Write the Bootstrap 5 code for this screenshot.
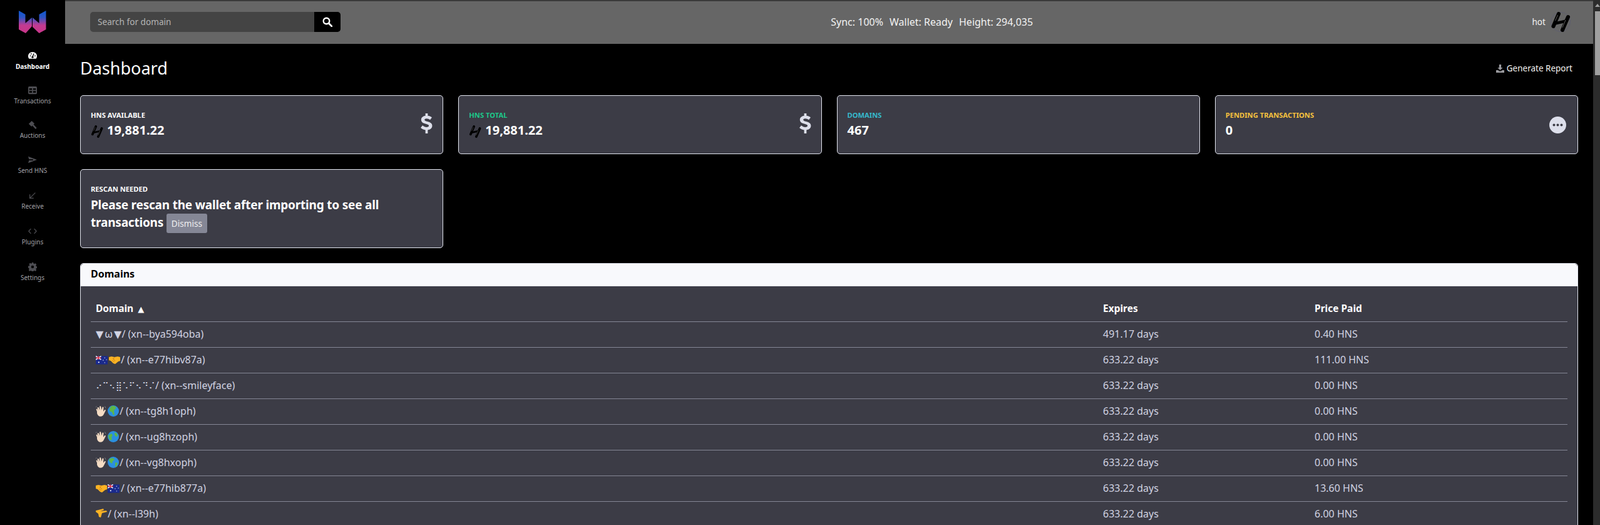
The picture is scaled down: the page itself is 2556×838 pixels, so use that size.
<!DOCTYPE html>
<html lang="en">
<head>
  <meta charset="UTF-8">
  <title>Dashboard</title>
  <link href="https://cdn.jsdelivr.net/npm/bootstrap@5.3.0/dist/css/bootstrap.min.css" rel="stylesheet">
  <style>
    html, body { height: 100%; overflow: hidden; }
    body { background: #000; color: #fff; font-family: "Noto Sans", "Liberation Sans", sans-serif; font-size: 16px; }
    .app-shell { height: 838px; }

    .side-nav { width: 104px; flex: none; background: #000; }
    .side-logo { height: 70px; }
    .side-link { color: #a0a0a6; font-size: 10px; line-height: 15.6px; text-decoration: none; height: 55px; padding-top: 12px; }
    .side-link.is-tall { height: 57px; padding-top: 13px; }
    .side-link.is-on { color: #fff; font-weight: 700; }
    .side-link svg { width: 14px; height: 14px; margin-bottom: 3px; flex: none; }

    .main-col { min-width: 0; }
    .top-strip { height: 70px; flex: none; background: #666; border-top: 2px solid #3a3a3a; padding: 0 36px 2px 40px; }
    .search-box { width: 400px; height: 32px; background: #444; border-radius: 5px; overflow: hidden; }
    .search-box input { background: transparent; border: 0; outline: 0; color: #ccc; font-size: 13.6px; padding: 0 12px; min-width: 0; }
    .search-box input::placeholder { color: #b4b4b4; }
    .search-go { width: 42px; border: 0; background: #000; }
    .sync-text { font-size: 16px; color: #f2f2f2; gap: 10px; margin-right: 14px; }
    .user-name { font-size: 13.6px; color: #f2f2f2; }
    .user-pic { width: 32px; height: 32px; }

    .page-body { padding: 22px 24px 0; }
    .page-title { font-size: 27px; font-weight: 400; margin: 0; line-height: 34px; }
    .report-link { color: #f2f2f2; font-size: 13.5px; text-decoration: none; margin-right: 9px; }
    .head-row { margin-bottom: 26px; height: 34px; }
    .stat-row { --bs-gutter-x: 24px; --bs-gutter-y: 24px; margin-bottom: 24px; }
    .stat-box { background: #3c3c46; border: 1px solid #e3e6f0; border-radius: 5px; height: 94px; padding: 23px 16px 0; }
    .stat-box.tall-box { height: 126px; }
    .stat-label { font-size: 11.2px; font-weight: 700; text-transform: uppercase; line-height: 16px; margin-bottom: 4px; color: #fff; }
    .stat-label.lbl-green { color: #1cc88a; }
    .stat-label.lbl-cyan { color: #36b9cc; }
    .stat-label.lbl-amber { color: #f6c23e; }
    .stat-value { font-size: 20px; font-weight: 700; line-height: 24px; }
    .tall-box .stat-value { font-size: 19px; letter-spacing: -.2px; line-height: 27px; }
    .hns-mark { width: 20px; height: 20px; vertical-align: -5px; margin-right: 6px; }
    .dollar-ico { width: 19px; height: 32px; margin-top: 5px; flex: none; }
    .dots-ico { width: 27px; height: 27px; margin-top: 10px; margin-right: 2px; flex: none; }
    .dismiss-btn { background: #858796; color: #f0f0f0; font-size: 13.6px; font-weight: 400; letter-spacing: 0; line-height: 21px; border: 0; border-radius: 3px; padding: 5px 8px; vertical-align: middle; }

    .domain-card { background: #3c3c46; border: 1px solid #e3e6f0; border-radius: 5px 5px 0 0; }
    .domain-card .card-header { background: #f8f9fc; color: #000; font-weight: 700; font-size: 16px; height: 36px; padding: 4px 16px; border-bottom: 1px solid #e3e6f0; }
    .domain-card .card-body { padding: 16px; }
    .domain-table { --bs-table-bg: transparent; --bs-table-color: #d1d3e2; margin: 0; table-layout: fixed; color: #d1d3e2; }
    .domain-table th { color: #fff; font-weight: 700; font-size: 15.5px; }
    .domain-table th, .domain-table td { padding: 7px 8px 9px; line-height: 24px; border-bottom: 1px solid #858796; white-space: nowrap; }
    .domain-table .col-name { width: 1609px; }
    .domain-table .col-exp { width: 338px; }
    .emo { width: 18px; height: 18px; vertical-align: -3px; margin-right: 1px; }
    .flag-emo { width: 19px; height: 14px; vertical-align: -2px; margin-right: 2px; }
    .dots { font-family: "DejaVu Sans", sans-serif; font-size: 14px; line-height: 1; letter-spacing: .3px; }
    .tri { font-family: "DejaVu Sans", sans-serif; font-size: 16px; line-height: 1; }
    .omega { margin: 0 2px; }
    .tri-head { font-family: "DejaVu Sans", sans-serif; font-size: 13px; line-height: 1; margin-left: 3px; }

    .fake-scroll { width: 11px; flex: none; background: #2c2c2c; position: relative; }
    .fake-scroll .thumb { position: absolute; left: 3px; right: 0; top: 18px; height: 102px; background: #9f9f9f; }
    .fake-scroll .up-arrow { position: absolute; left: 3px; top: 6px; width: 0; height: 0; border-left: 4px solid transparent; border-right: 4px solid transparent; border-bottom: 5px solid #9f9f9f; }
  </style>
</head>
<body>

<svg width="0" height="0" class="d-none">
  <symbol id="hns" viewBox="0 0 32 32">
    <g fill="none" stroke="#000" stroke-width="6" stroke-linecap="round">
      <path d="M13 3L4.500 23"/>
      <path d="M28 8L19 29"/>
      <path d="M7 18.500L25 14.500" stroke-width="4.500"/>
    </g>
    <g fill="none" stroke="#777" stroke-width=".8">
      <path d="M11.500 5L7.500 14"/>
      <path d="M24 13l-5 12"/>
    </g>
  </symbol>
</svg>

<div class="app-shell d-flex">

  <!-- sidebar -->
  <nav class="side-nav d-flex flex-column">
    <div class="side-logo d-flex align-items-center justify-content-center">
      <svg width="44" height="36" viewBox="0 0 44 36">
        <defs><linearGradient id="logoFill" x1="0" y1="0" x2="0" y2="1"><stop offset="0" stop-color="#0d58cf"/><stop offset=".3" stop-color="#2d55c4"/><stop offset=".65" stop-color="#c33a91"/><stop offset="1" stop-color="#c9378a"/></linearGradient></defs>
        <path d="M0 0L10.500 6V20L21 11V25L11 36 0 30z M22 11L32.500 20V6L43.500 0V30L32.500 36 22 26z" fill="url(#logoFill)"/>
      </svg>
    </div>
    <a href="#" class="side-link is-on d-flex flex-column align-items-center">
      <svg viewBox="0 0 16 16"><path d="M8 1a8 7.500 0 0 0-8 7.500c0 2 .7 3.700 1.800 5h12.400c1.100-1.300 1.800-3 1.800-5A8 7.500 0 0 0 8 1z" fill="#fff"/><circle cx="4" cy="8" r="1" fill="#000"/><circle cx="5.500" cy="4.500" r="1" fill="#000"/><path d="M10.500 4L8.300 9.500" stroke="#000" stroke-width="1.500"/><circle cx="8" cy="10.500" r="1.800" fill="#000"/><circle cx="12.500" cy="8" r="1" fill="#000"/></svg>
      <span>Dashboard</span>
    </a>
    <a href="#" class="side-link d-flex flex-column align-items-center">
      <svg viewBox="0 0 16 16"><path fill="#4d4d52" fill-rule="evenodd" d="M2 1h12a2 2 0 0 1 2 2v10a2 2 0 0 1-2 2H2a2 2 0 0 1-2-2V3a2 2 0 0 1 2-2zm0 3.500v3h5v-3zm7 0v3h5v-3zm-7 5v3h5v-3zm7 0v3h5v-3z"/></svg>
      <span>Transactions</span>
    </a>
    <a href="#" class="side-link d-flex flex-column align-items-center">
      <svg viewBox="0 0 16 16"><path fill="#4d4d52" d="M1 6.500L6.500 1l5 5L6 11.500z"/><path stroke="#4d4d52" stroke-width="3" d="M8.500 8.500l6 6.500"/></svg>
      <span>Auctions</span>
    </a>
    <a href="#" class="side-link is-tall d-flex flex-column align-items-center">
      <svg viewBox="0 0 16 16"><path fill="#4d4d52" d="M0 2l16 6-16 6 1.500-5H9V7H1.500z"/></svg>
      <span>Send HNS</span>
    </a>
    <a href="#" class="side-link is-tall d-flex flex-column align-items-center">
      <svg viewBox="0 0 16 16"><path fill="none" stroke="#4d4d52" stroke-width="1.500" d="M13 3L3 13M3 6v7h7"/></svg>
      <span>Receive</span>
    </a>
    <a href="#" class="side-link is-tall d-flex flex-column align-items-center">
      <svg viewBox="0 0 16 16"><path fill="none" stroke="#4d4d52" stroke-width="1.500" d="M5 3.500L1 8l4 4.500M11 3.500L15 8l-4 4.500"/></svg>
      <span>Plugins</span>
    </a>
    <a href="#" class="side-link is-tall d-flex flex-column align-items-center">
      <svg viewBox="0 0 16 16"><path fill="#4d4d52" fill-rule="evenodd" d="M6.500 0h3l.4 2.100 1.300.6 1.900-1.200 2.100 2.100-1.200 1.900.6 1.300 2.100.4v3l-2.100.4-.6 1.300 1.200 1.900-2.100 2.100-1.900-1.200-1.300.6-.4 2.100h-3l-.4-2.100-1.300-.6-1.900 1.200-2.100-2.100 1.200-1.900-.6-1.300L0 9.500v-3l2.100-.4.6-1.300L1.500 2.900l2.100-2.100 1.900 1.200 1.300-.6zM8 5.500a2.500 2.500 0 1 0 0 5 2.500 2.500 0 0 0 0-5z"/></svg>
      <span>Settings</span>
    </a>
  </nav>

  <div class="main-col flex-grow-1 d-flex flex-column overflow-hidden">

    <!-- top bar -->
    <header class="top-strip d-flex align-items-center justify-content-between">
      <form class="search-box d-flex">
        <input class="flex-grow-1" type="text" placeholder="Search for domain">
        <button type="button" class="search-go d-flex align-items-center justify-content-center">
          <svg width="16" height="16" viewBox="0 0 16 16"><circle cx="6.500" cy="6.500" r="4.800" fill="none" stroke="#fff" stroke-width="2.400"/><path d="M10 10l5 5" stroke="#fff" stroke-width="2.800" stroke-linecap="round"/></svg>
        </button>
      </form>
      <div class="sync-text d-flex">
        <span>Sync: 100%</span><span>Wallet: Ready</span><span>Height: 294,035</span>
      </div>
      <div class="d-flex align-items-center gap-2">
        <span class="user-name">hot</span>
        <svg class="user-pic" viewBox="0 0 32 32"><circle cx="16" cy="16" r="15.500" fill="none" stroke="#5f5f70"/><use href="#hns"/></svg>
      </div>
    </header>

    <main class="page-body flex-grow-1">
      <div class="head-row d-flex align-items-center justify-content-between">
        <h1 class="page-title">Dashboard</h1>
        <a href="#" class="report-link d-flex align-items-center gap-1">
          <svg width="13" height="13" viewBox="0 0 16 16"><path fill="#9a9a9f" d="M6 0h4v6h3L8 11 3 6h3zM0 11h4l2 2h4l2-2h4v5H0z"/></svg>
          Generate Report
        </a>
      </div>

      <div class="row stat-row">
        <div class="col-3">
          <div class="stat-box d-flex align-items-start justify-content-between">
            <div>
              <div class="stat-label">HNS Available</div>
              <div class="stat-value"><svg class="hns-mark"><use href="#hns"/></svg>19,881.22</div>
            </div>
            <svg class="dollar-ico" viewBox="0 0 20 34"><path fill="#dddfeb" d="M8 0h4v4c3 .3 5.500 1.500 7 3l-3 4c-2-1.500-4-2.300-6-2.300-2.200 0-3.500.8-3.500 2.100 0 1.400 1.500 2 5 3 5 1.300 8 3 8 7.300 0 4-2.800 6.500-7.500 7V34H8v-5.900c-3.200-.4-6-1.700-8-3.600l3-4c2.200 1.800 4.500 2.800 7 2.800 2.400 0 3.800-.9 3.800-2.300 0-1.500-1.500-2.100-5-3.100-5-1.300-8-3-8-7.200C.8 7.300 3.500 4.700 8 4z"/></svg>
          </div>
        </div>
        <div class="col-3">
          <div class="stat-box d-flex align-items-start justify-content-between">
            <div>
              <div class="stat-label lbl-green">HNS Total</div>
              <div class="stat-value"><svg class="hns-mark"><use href="#hns"/></svg>19,881.22</div>
            </div>
            <svg class="dollar-ico" viewBox="0 0 20 34"><path fill="#dddfeb" d="M8 0h4v4c3 .3 5.500 1.500 7 3l-3 4c-2-1.500-4-2.300-6-2.300-2.200 0-3.500.8-3.500 2.100 0 1.400 1.500 2 5 3 5 1.300 8 3 8 7.300 0 4-2.800 6.500-7.500 7V34H8v-5.900c-3.200-.4-6-1.700-8-3.600l3-4c2.200 1.800 4.500 2.800 7 2.800 2.400 0 3.800-.9 3.800-2.300 0-1.500-1.500-2.100-5-3.100-5-1.300-8-3-8-7.200C.8 7.300 3.500 4.700 8 4z"/></svg>
          </div>
        </div>
        <div class="col-3">
          <div class="stat-box">
            <div class="stat-label lbl-cyan">Domains</div>
            <div class="stat-value">467</div>
          </div>
        </div>
        <div class="col-3">
          <div class="stat-box d-flex align-items-start justify-content-between">
            <div>
              <div class="stat-label lbl-amber">Pending Transactions</div>
              <div class="stat-value">0</div>
            </div>
            <svg class="dots-ico" viewBox="0 0 27 27"><circle cx="13.500" cy="13.500" r="13.500" fill="#dddfeb"/><circle cx="7.500" cy="13.500" r="2" fill="#3c3c46"/><circle cx="13.500" cy="13.500" r="2" fill="#3c3c46"/><circle cx="19.500" cy="13.500" r="2" fill="#3c3c46"/></svg>
          </div>
        </div>
        <div class="col-3">
          <div class="stat-box tall-box">
            <div class="stat-label">Rescan Needed</div>
            <div class="stat-value">
              <div>Please rescan the wallet after importing to see all</div>
              <div><span>transactions</span> <button type="button" class="dismiss-btn">Dismiss</button></div>
            </div>
          </div>
        </div>
      </div>

      <div class="card domain-card">
        <div class="card-header">Domains</div>
        <div class="card-body">
          <table class="table domain-table">
            <thead>
              <tr><th class="col-name">Domain <span class="tri-head">▲</span></th><th class="col-exp">Expires</th><th>Price Paid</th></tr>
            </thead>
            <tbody id="domainRows"></tbody>
          </table>
        </div>
      </div>
    </main>
  </div>

  <div class="fake-scroll"><span class="up-arrow"></span><div class="thumb"></div></div>
</div>

<script>
  // small emoji drawings, no emoji font on the box
  const flag = '<svg class="flag-emo" viewBox="0 0 20 14"><rect width="20" height="14" fill="#1a2a8c"/><path d="M0 0l9 6M9 0L0 6" stroke="#fff" stroke-width="1.500"/><path d="M4.500 0v6M0 3h9" stroke="#e03040" stroke-width="1.600"/><g fill="#fff"><circle cx="5" cy="10.500" r="1.100"/><circle cx="15" cy="3" r=".7"/><circle cx="18" cy="6" r=".7"/><circle cx="12.500" cy="7" r=".7"/><circle cx="15" cy="11" r=".7"/></g></svg>';
  const shake = '<svg class="emo" viewBox="0 0 18 18"><path d="M0 5l4-1 5 1 5-1 4 1v6l-3 1-5 4-3-1-4-4-3-1z" fill="#fbb324"/><path d="M7 8l3 3M5.500 10l3 3M9 6L6 8" stroke="#c97d10" fill="none"/></svg>';
  const wave = '<svg class="emo" viewBox="0 0 18 18"><path d="M2 10L.5 6l1.800-.5L4 9 2.500 3.500 4.500 3 6.500 8 6 1.500 8 1.200 9.500 7.500 10.500 2.500l2 .3-.5 7 2.500-3 1.500 1-3 6c-1 2.500-3 4-5.500 4-2.500 0-4.500-1.500-5.500-5z" fill="#f5dcc4"/><path d="M14 1.500c1 .6 1.500 1.500 1.800 3M1 1.500C.5 2 .2 2.800 0 3.500" stroke="#8a8a90" fill="none"/></svg>';
  const globe = c => '<svg class="emo" viewBox="0 0 18 18"><circle cx="9" cy="9" r="9" fill="#2b8fe0"/><path d="' + c + '" fill="#5cb64a"/></svg>';
  const globeA = globe('M6 1l5 0 3 3-3 3-1 3 1 4-2 2-2-5-4-2 0-4z');
  const globeB = globe('M1 7l5-3 2 3-2 3 1 3-2 2-3-3z M11 2l4 2 1 4-3 1-2-3z');
  const globeC = globe('M3 3l6-1 2 3-3 2-1 4-3-2-2-3z M12 9l4 1-2 5-2 1z');
  const pinch = '<svg class="emo" viewBox="0 0 18 18"><path d="M0 4l12-3 1 2-6 2 10-1 1 2-8 2-2 7-3-1-1-5-4-3z" fill="#fbb324"/></svg>';

  const domains = [
    ['<span class="tri">▼</span><span class="omega">ω</span><span class="tri">▼</span>', 'xn--bya594oba', '491.17', '0.40'],
    [flag + shake, 'xn--e77hibv87a', '633.22', '111.00'],
    ['<span class="dots">⠔⠉⠢⣿⠡⠋⠢⠙⠌</span>', 'xn--smileyface', '633.22', '0.00'],
    [wave + globeA, 'xn--tg8h1oph', '633.22', '0.00'],
    [wave + globeB, 'xn--ug8hzoph', '633.22', '0.00'],
    [wave + globeC, 'xn--vg8hxoph', '633.22', '0.00'],
    [shake + flag, 'xn--e77hib877a', '633.22', '13.60'],
    [pinch, 'xn--l39h', '633.22', '6.00']
  ];

  document.getElementById('domainRows').innerHTML = domains.map(d =>
    '<tr><td>' + d[0] + '/ (' + d[1] + ')</td><td>' + d[2] + ' days</td><td>' + d[3] + ' HNS</td></tr>'
  ).join('');
</script>
<script src="https://cdn.jsdelivr.net/npm/bootstrap@5.3.0/dist/js/bootstrap.bundle.min.js"></script>
</body>
</html>
